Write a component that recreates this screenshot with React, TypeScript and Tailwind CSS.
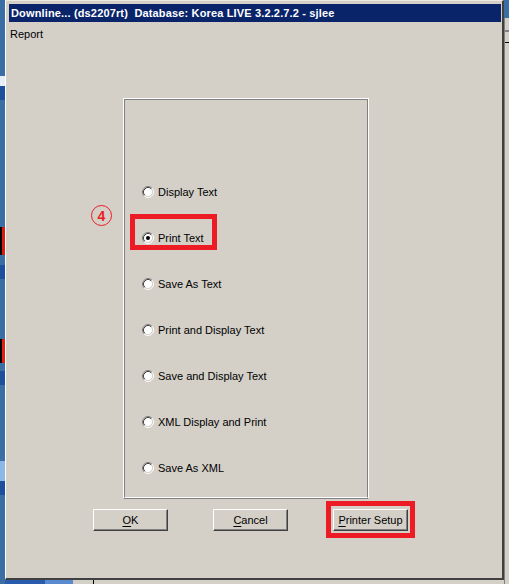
import React from 'react';

const options = [
  'Display Text',
  'Print Text',
  'Save As Text',
  'Print and Display Text',
  'Save and Display Text',
  'XML Display and Print',
  'Save As XML',
];

// classic win32 radio button
function Radio({ checked }: { checked: boolean }) {
  return (
    <svg width="12" height="12" viewBox="0 0 12 12" className="shrink-0">
      <circle cx="6" cy="6" r="4.5" fill="#ffffff" />
      <path d="M2.11 9.89 A5.5 5.5 0 0 1 9.89 2.11" fill="none" stroke="#808080" strokeWidth="1" />
      <path d="M9.89 2.11 A5.5 5.5 0 0 1 2.11 9.89" fill="none" stroke="#ffffff" strokeWidth="1" />
      <path d="M2.82 9.18 A4.5 4.5 0 0 1 9.18 2.82" fill="none" stroke="#404040" strokeWidth="1" />
      <path d="M9.18 2.82 A4.5 4.5 0 0 1 2.82 9.18" fill="none" stroke="#d4d0c8" strokeWidth="1" />
      {checked && <circle cx="6" cy="6" r="2" fill="#000000" />}
    </svg>
  );
}

function Button({ label, hotkey }: { label: string; hotkey: number }) {
  return (
    <button className="w-[75px] h-[22px] flex items-center justify-center bg-[#d4d0c8] border border-t-white border-l-white border-r-[#404040] border-b-[#404040] shadow-[inset_-1px_-1px_#808080] text-[11px] text-black">
      <span>
        {label.slice(0, hotkey)}
        <span className="underline underline-offset-2">{label[hotkey]}</span>
        {label.slice(hotkey + 1)}
      </span>
    </button>
  );
}

export default function App() {
  return (
    <div className="flex w-[509px] h-[584px] overflow-hidden bg-[#3a6ea5] font-['Liberation_Sans',Arial,sans-serif]">
      {/* desktop behind, left edge */}
      <div className="w-[5px] flex flex-col shrink-0">
        <div className="h-[76px]" />
        <div className="h-[10px] bg-[#e8eef8]" />
        <div className="h-[14px] bg-[#1d4f9c]" />
        <div className="h-[127px]" />
        <div className="h-[28px] bg-[#000000] flex"><div className="w-[3px] ml-[2px] bg-[#d81c10]" /></div>
        <div className="h-[10px]" />
        <div className="h-[14px] bg-[#1d4f9c]" />
        <div className="h-[60px]" />
        <div className="h-[24px] bg-[#000000] flex"><div className="w-[3px] ml-[2px] bg-[#e02010]" /></div>
        <div className="h-[8px]" />
        <div className="h-[14px] bg-[#1d4f9c]" />
        <div className="h-[76px]" />
        <div className="h-[20px] bg-[#8cb8e8]" />
        <div className="h-[14px] bg-[#1d4f9c]" />
      </div>

      <div className="flex flex-col w-[499px] shrink-0">
        {/* dialog */}
        <div className="relative h-[580px] bg-[#d4d0c8] border-l border-t border-l-white border-t-[#ece9e2] border-r-2 border-b-2 border-r-[#404040] border-b-[#404040] flex flex-col">
          <div className="ml-[3px] mr-[1px] mt-[3px] h-[18px] bg-[#0a246a] flex items-center pl-[2px]">
            <span className="text-white font-bold text-[11px] whitespace-pre tracking-[0.15px]">
              Downline... (ds2207rt)  Database: Korea LIVE 3.2.2.7.2 - sjlee
            </span>
          </div>
          <div className="ml-[4px] mt-[5px] text-[11px] text-black leading-[14px]">Report</div>

          <div className="ml-[117px] mt-[57px] w-[246px] h-[401px] border border-t-white border-l-white border-r-white border-b-[#808080]">
            <div className="w-full h-full border border-t-[#808080] border-l-[#808080] border-r-[#808080] border-b-white flex flex-col pl-[17px] pt-[85px] gap-[32px]">
              {options.map((opt, i) => (
                <div key={opt} className="relative flex items-center gap-[4px] h-[14px]">
                  <Radio checked={i === 1} />
                  <span className="text-[11px] text-black leading-[14px]">{opt}</span>
                  {i === 1 && (
                    <div className="absolute left-[-12px] top-[-17px] w-[87px] h-[36px] border-[5px] border-[#ed1c24]" />
                  )}
                </div>
              ))}
            </div>
          </div>

          <div className="ml-[87px] mt-[10px] flex gap-[45px]">
            <Button label="OK" hotkey={0} />
            <Button label="Cancel" hotkey={0} />
            <div className="relative">
              <Button label="Printer Setup" hotkey={0} />
              <div className="absolute left-[-7px] top-[-8px] w-[89px] h-[37px] border-[5px] border-[#ed1c24]" />
            </div>
          </div>

          {/* step marker */}
          <div className="absolute left-[85px] top-[204px] w-[21px] h-[21px] rounded-full border-[1.5px] border-[#ed1c24] flex items-center justify-center">
            <span className="text-[#ed1c24] text-[14px] leading-none font-semibold">4</span>
          </div>
        </div>
        {/* taskbar behind */}
        <div className="h-[4px] flex">
          <div className="w-[40px] bg-[#2a5cae]" />
          <div className="w-[28px] bg-[#5a8ad0]" />
          <div className="w-[20px] bg-[#d4d0c8]" />
          <div className="w-[1px] bg-black" />
          <div className="flex-1 bg-[#d4d0c8]" />
        </div>
      </div>

      {/* window behind, right edge */}
      <div className="w-[5px] flex flex-col shrink-0">
        <div className="h-[18px] bg-[#3a6ea5]" />
        <div className="flex-1 bg-[#d4d0c8] border-l border-l-[#808080] flex flex-col">
          <div className="h-[12px]" />
          <div className="h-[2px] bg-[#808080]" />
          <div className="h-[10px]" />
          <div className="h-[1px] bg-black" />
        </div>
      </div>
    </div>
  );
}
